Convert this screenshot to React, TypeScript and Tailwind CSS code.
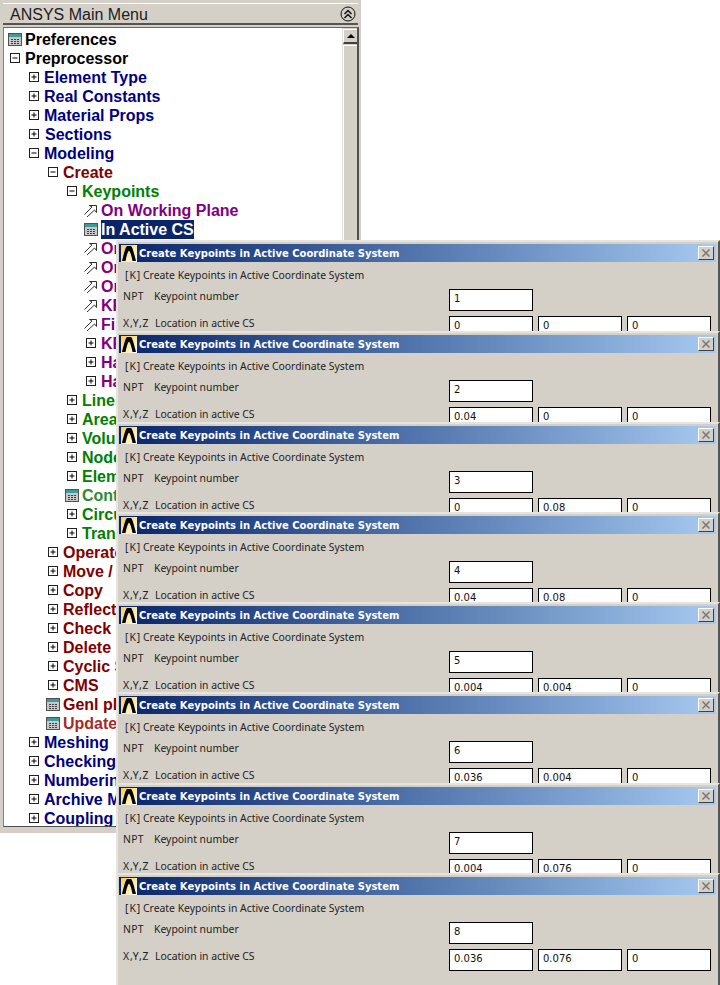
// ANSYS main menu tree with a stack of Create Keypoints dialogs on top
type Kind = 'plus' | 'minus' | 'calc' | 'arrow'

type Item = {
  label: string
  kind: Kind
  indent: string
  color: string
  selected?: boolean
  gap?: string
}

const black = 'text-black'
const navy = 'text-[#000080]'
const red = 'text-[#800000]'
const green = 'text-[#008000]'
const purple = 'text-[#800080]'
const paleGreen = 'text-[#2e8b2e]'
const paleRed = 'text-[#a52a2a]'

const items: Item[] = [
  { label: 'Preferences', kind: 'calc', indent: 'pl-[4px]', color: black },
  { label: 'Preprocessor', kind: 'minus', indent: 'pl-[4px]', color: black },
  { label: 'Element Type', kind: 'plus', indent: 'pl-[23px]', color: navy },
  { label: 'Real Constants', kind: 'plus', indent: 'pl-[23px]', color: navy },
  { label: 'Material Props', kind: 'plus', indent: 'pl-[23px]', color: navy },
  { label: 'Sections', kind: 'plus', indent: 'pl-[23px]', color: navy, gap: 'ml-[4px]' },
  { label: 'Modeling', kind: 'minus', indent: 'pl-[23px]', color: navy },
  { label: 'Create', kind: 'minus', indent: 'pl-[42px]', color: red },
  { label: 'Keypoints', kind: 'minus', indent: 'pl-[61px]', color: green },
  { label: 'On Working Plane', kind: 'arrow', indent: 'pl-[80px]', color: purple },
  { label: 'In Active CS', kind: 'calc', indent: 'pl-[80px]', color: purple, selected: true },
  { label: 'On Line', kind: 'arrow', indent: 'pl-[80px]', color: purple },
  { label: 'On Line w/Ratio', kind: 'arrow', indent: 'pl-[80px]', color: purple },
  { label: 'On Node', kind: 'arrow', indent: 'pl-[80px]', color: purple },
  { label: 'KP between KPs', kind: 'arrow', indent: 'pl-[80px]', color: purple },
  { label: 'Fill between KPs', kind: 'arrow', indent: 'pl-[80px]', color: purple },
  { label: 'KP at center', kind: 'plus', indent: 'pl-[80px]', color: purple },
  { label: 'Hard PT on line', kind: 'plus', indent: 'pl-[80px]', color: purple },
  { label: 'Hard PT on area', kind: 'plus', indent: 'pl-[80px]', color: purple },
  { label: 'Lines', kind: 'plus', indent: 'pl-[61px]', color: green },
  { label: 'Areas', kind: 'plus', indent: 'pl-[61px]', color: green },
  { label: 'Volumes', kind: 'plus', indent: 'pl-[61px]', color: green },
  { label: 'Nodes', kind: 'plus', indent: 'pl-[61px]', color: green },
  { label: 'Elements', kind: 'plus', indent: 'pl-[61px]', color: green },
  { label: 'Contact Pair', kind: 'calc', indent: 'pl-[61px]', color: paleGreen },
  { label: 'Circuit', kind: 'plus', indent: 'pl-[61px]', color: green },
  { label: 'Transducers', kind: 'plus', indent: 'pl-[61px]', color: green },
  { label: 'Operate', kind: 'plus', indent: 'pl-[42px]', color: red },
  { label: 'Move / Modify', kind: 'plus', indent: 'pl-[42px]', color: red },
  { label: 'Copy', kind: 'plus', indent: 'pl-[42px]', color: red },
  { label: 'Reflect', kind: 'plus', indent: 'pl-[42px]', color: red },
  { label: 'Check Geom', kind: 'plus', indent: 'pl-[42px]', color: red },
  { label: 'Delete', kind: 'plus', indent: 'pl-[42px]', color: red },
  { label: 'Cyclic Sector', kind: 'plus', indent: 'pl-[42px]', color: red },
  { label: 'CMS', kind: 'plus', indent: 'pl-[42px]', color: red },
  { label: 'Genl plane strn', kind: 'calc', indent: 'pl-[42px]', color: red },
  { label: 'Update Geom', kind: 'calc', indent: 'pl-[42px]', color: paleRed },
  { label: 'Meshing', kind: 'plus', indent: 'pl-[23px]', color: navy },
  { label: 'Checking Ctrls', kind: 'plus', indent: 'pl-[23px]', color: navy },
  { label: 'Numbering Ctrls', kind: 'plus', indent: 'pl-[23px]', color: navy },
  { label: 'Archive Model', kind: 'plus', indent: 'pl-[23px]', color: navy },
  { label: 'Coupling / Ceqn', kind: 'plus', indent: 'pl-[23px]', color: navy },
]

const dialogs = [
  { npt: '1', xyz: ['0', '0', '0'], pos: 'top-[240px] h-[91px]' },
  { npt: '2', xyz: ['0.04', '0', '0'], pos: 'top-[331px] h-[91px]' },
  { npt: '3', xyz: ['0', '0.08', '0'], pos: 'top-[422px] h-[90px]' },
  { npt: '4', xyz: ['0.04', '0.08', '0'], pos: 'top-[512px] h-[90px]' },
  { npt: '5', xyz: ['0.004', '0.004', '0'], pos: 'top-[602px] h-[90px]' },
  { npt: '6', xyz: ['0.036', '0.004', '0'], pos: 'top-[692px] h-[91px]' },
  { npt: '7', xyz: ['0.004', '0.076', '0'], pos: 'top-[783px] h-[90px]' },
  { npt: '8', xyz: ['0.036', '0.076', '0'], pos: 'top-[873px] h-[112px]' },
]

function TreeIcon({ kind }: { kind: Kind }) {
  if (kind === 'calc') {
    return (
      <svg width="14" height="13" viewBox="0 0 14 13" className="shrink-0">
        <rect x="0.5" y="0.5" width="13" height="12" fill="#c8c8c8" stroke="#505050" />
        <rect x="1" y="1" width="12" height="3" fill="#3f9a9a" />
        <g fill="#404040">
          <rect x="3" y="6" width="2" height="1" />
          <rect x="6" y="6" width="2" height="1" />
          <rect x="9" y="6" width="2" height="1" />
          <rect x="3" y="8" width="2" height="1" />
          <rect x="6" y="8" width="2" height="1" />
          <rect x="9" y="8" width="2" height="1" />
          <rect x="3" y="10" width="2" height="1" />
          <rect x="6" y="10" width="2" height="1" />
          <rect x="9" y="10" width="2" height="1" />
        </g>
      </svg>
    )
  }
  if (kind === 'arrow') {
    return (
      <svg width="14" height="13" viewBox="0 0 14 13" className="shrink-0">
        <path d="M0.5 10.5 L8 3 L5.5 1.5 H12.5 V8.5 L10.5 6 L3 13" fill="none" stroke="#303030" strokeWidth="1" />
      </svg>
    )
  }
  return (
    <svg width="14" height="13" viewBox="0 0 14 13" className="shrink-0">
      <rect x="2.5" y="1.5" width="9" height="9" fill="#fff" stroke="#202020" />
      <path d={kind === 'plus' ? 'M4.5 6 H9.5 M7 3.5 V8.5' : 'M4.5 6 H9.5'} stroke="#000" fill="none" />
    </svg>
  )
}

function TreeRow({ item }: { item: Item }) {
  return (
    <div className={`flex h-[19px] items-center whitespace-nowrap ${item.indent}`}>
      <TreeIcon kind={item.kind} />
      <span
        className={`h-[19px] text-[16px] leading-[19px] font-bold ${item.gap ?? 'ml-[3px]'} ${
          item.selected ? 'bg-[#0a246a] text-white' : item.color
        }`}
      >
        {item.label}
      </span>
    </div>
  )
}

function MainMenu() {
  return (
    <div className="flex h-[833px] w-[361px] flex-col bg-[#d4d0c8] pb-[6px]">
      <div className="mx-[3px] mt-[3px] flex h-[22px] items-center justify-between border-t border-b-2 border-t-white border-b-[#555555] pr-[2px] pl-[7px]">
        <span className="pt-[2px] text-[16px] text-[#202020]">ANSYS Main Menu</span>
        <svg width="16" height="16" viewBox="0 0 16 16">
          <circle cx="8" cy="8" r="7" fill="none" stroke="#111" />
          <path d="M4.5 8 L8 4.5 L11.5 8 M4.5 12 L8 8.5 L11.5 12" fill="none" stroke="#111" strokeWidth="1.5" />
        </svg>
      </div>
      <div className="mt-[2px] mr-[2px] ml-[3px] flex min-h-0 flex-1 border-t border-r-2 border-b border-l border-t-[#666666] border-r-[#505050] border-b-[#505050] border-l-[#808080] bg-white">
        <div className="flex-1 overflow-hidden pt-[2px]">
          {items.map((item) => (
            <TreeRow key={item.label} item={item} />
          ))}
        </div>
        <div className="flex w-[15px] flex-col border-l border-l-[#e0e0e0] bg-[#d4d0c8] pt-[1px]">
          <div className="flex h-[15px] items-center justify-center border-t border-b-2 border-l border-t-white border-b-[#404040] border-l-white">
            <div className="h-0 w-0 border-x-[4px] border-b-[4px] border-x-transparent border-b-black" />
          </div>
          <div className="mt-[1px] flex-1 border-t border-l border-t-white border-l-white" />
        </div>
      </div>
    </div>
  )
}

function Logo() {
  return (
    <svg width="16" height="17" viewBox="0 0 16 17" className="shrink-0">
      <defs>
        <linearGradient id="ansysBg" x1="0" y1="0" x2="1" y2="1">
          <stop offset="0" stopColor="#ffcf3a" />
          <stop offset="1" stopColor="#ffffff" />
        </linearGradient>
      </defs>
      <rect width="16" height="17" fill="url(#ansysBg)" />
      <path d="M1 16 C3 8 4.5 2 6 1 H10 C11.5 2 13 8 15 16 H11.5 C10.5 11 9.5 7 8 5.5 C6.5 7 5.5 11 4.5 16 Z" fill="#000" />
    </svg>
  )
}

function Field({ value }: { value: string }) {
  return (
    <div className="h-[22px] w-[84px] border border-black bg-white pl-[4px] font-['DejaVu_Sans',sans-serif] text-[10px] leading-[18px] text-[#111]">
      {value}
    </div>
  )
}

function Dialog({ npt, xyz, pos }: { npt: string; xyz: string[]; pos: string }) {
  return (
    <div className={`absolute right-0 left-[116px] overflow-hidden border-t-2 border-r-2 border-l-2 border-t-[#e6e4df] border-r-[#555555] border-l-[#e6e4df] bg-[#d4d0c8] font-['Noto_Sans',sans-serif] text-[10.4px] leading-[14px] text-[#222] ${pos}`}>
      <div className="mt-[2px] mr-[2px] ml-[1px] flex h-[18px] items-center justify-between bg-gradient-to-r from-[#0a246a] to-[#a6caf0] pr-[2px] pl-[2px]">
        <div className="flex items-center gap-[2px]">
          <Logo />
          <span className="pt-[1px] font-['DejaVu_Sans',sans-serif] text-[10px] font-bold whitespace-nowrap text-white">
            Create Keypoints in Active Coordinate System
          </span>
        </div>
        <div className="flex h-[14px] w-[16px] items-center justify-center border border-t-white border-r-[#404040] border-b-[#404040] border-l-white bg-[#d4d0c8]">
          <svg width="10" height="10" viewBox="0 0 10 10">
            <path d="M1.5 1.5 L8.5 8.5 M8.5 1.5 L1.5 8.5" stroke="#777" strokeWidth="1.5" fill="none" />
          </svg>
        </div>
      </div>
      <div className="mt-[6px] flex h-[14px] items-center pl-[7px]">
        <span className="w-[18px] tracking-[1px]">[K]</span>
        <span className="whitespace-nowrap">Create Keypoints in Active Coordinate System</span>
      </div>
      <div className="mt-[7px] flex h-[22px] items-start pl-[5px]">
        <span className="w-[31px] tracking-[0.3px]">NPT</span>
        <span className="w-[295px]">Keypoint number</span>
        <Field value={npt} />
      </div>
      <div className="mt-[5px] flex h-[22px] items-start pl-[5px]">
        <span className="w-[32px] tracking-[0.8px] whitespace-nowrap">X,Y,Z</span>
        <span className="w-[294px]">Location in active CS</span>
        <div className="flex gap-[5px]">
          {xyz.map((v, i) => (
            <Field key={i} value={v} />
          ))}
        </div>
      </div>
    </div>
  )
}

export default function App() {
  return (
    <div className="relative h-[985px] w-[720px] overflow-hidden bg-white font-['Liberation_Sans',sans-serif]">
      <MainMenu />
      {dialogs.map((d) => (
        <Dialog key={d.npt} npt={d.npt} xyz={d.xyz} pos={d.pos} />
      ))}
    </div>
  )
}
